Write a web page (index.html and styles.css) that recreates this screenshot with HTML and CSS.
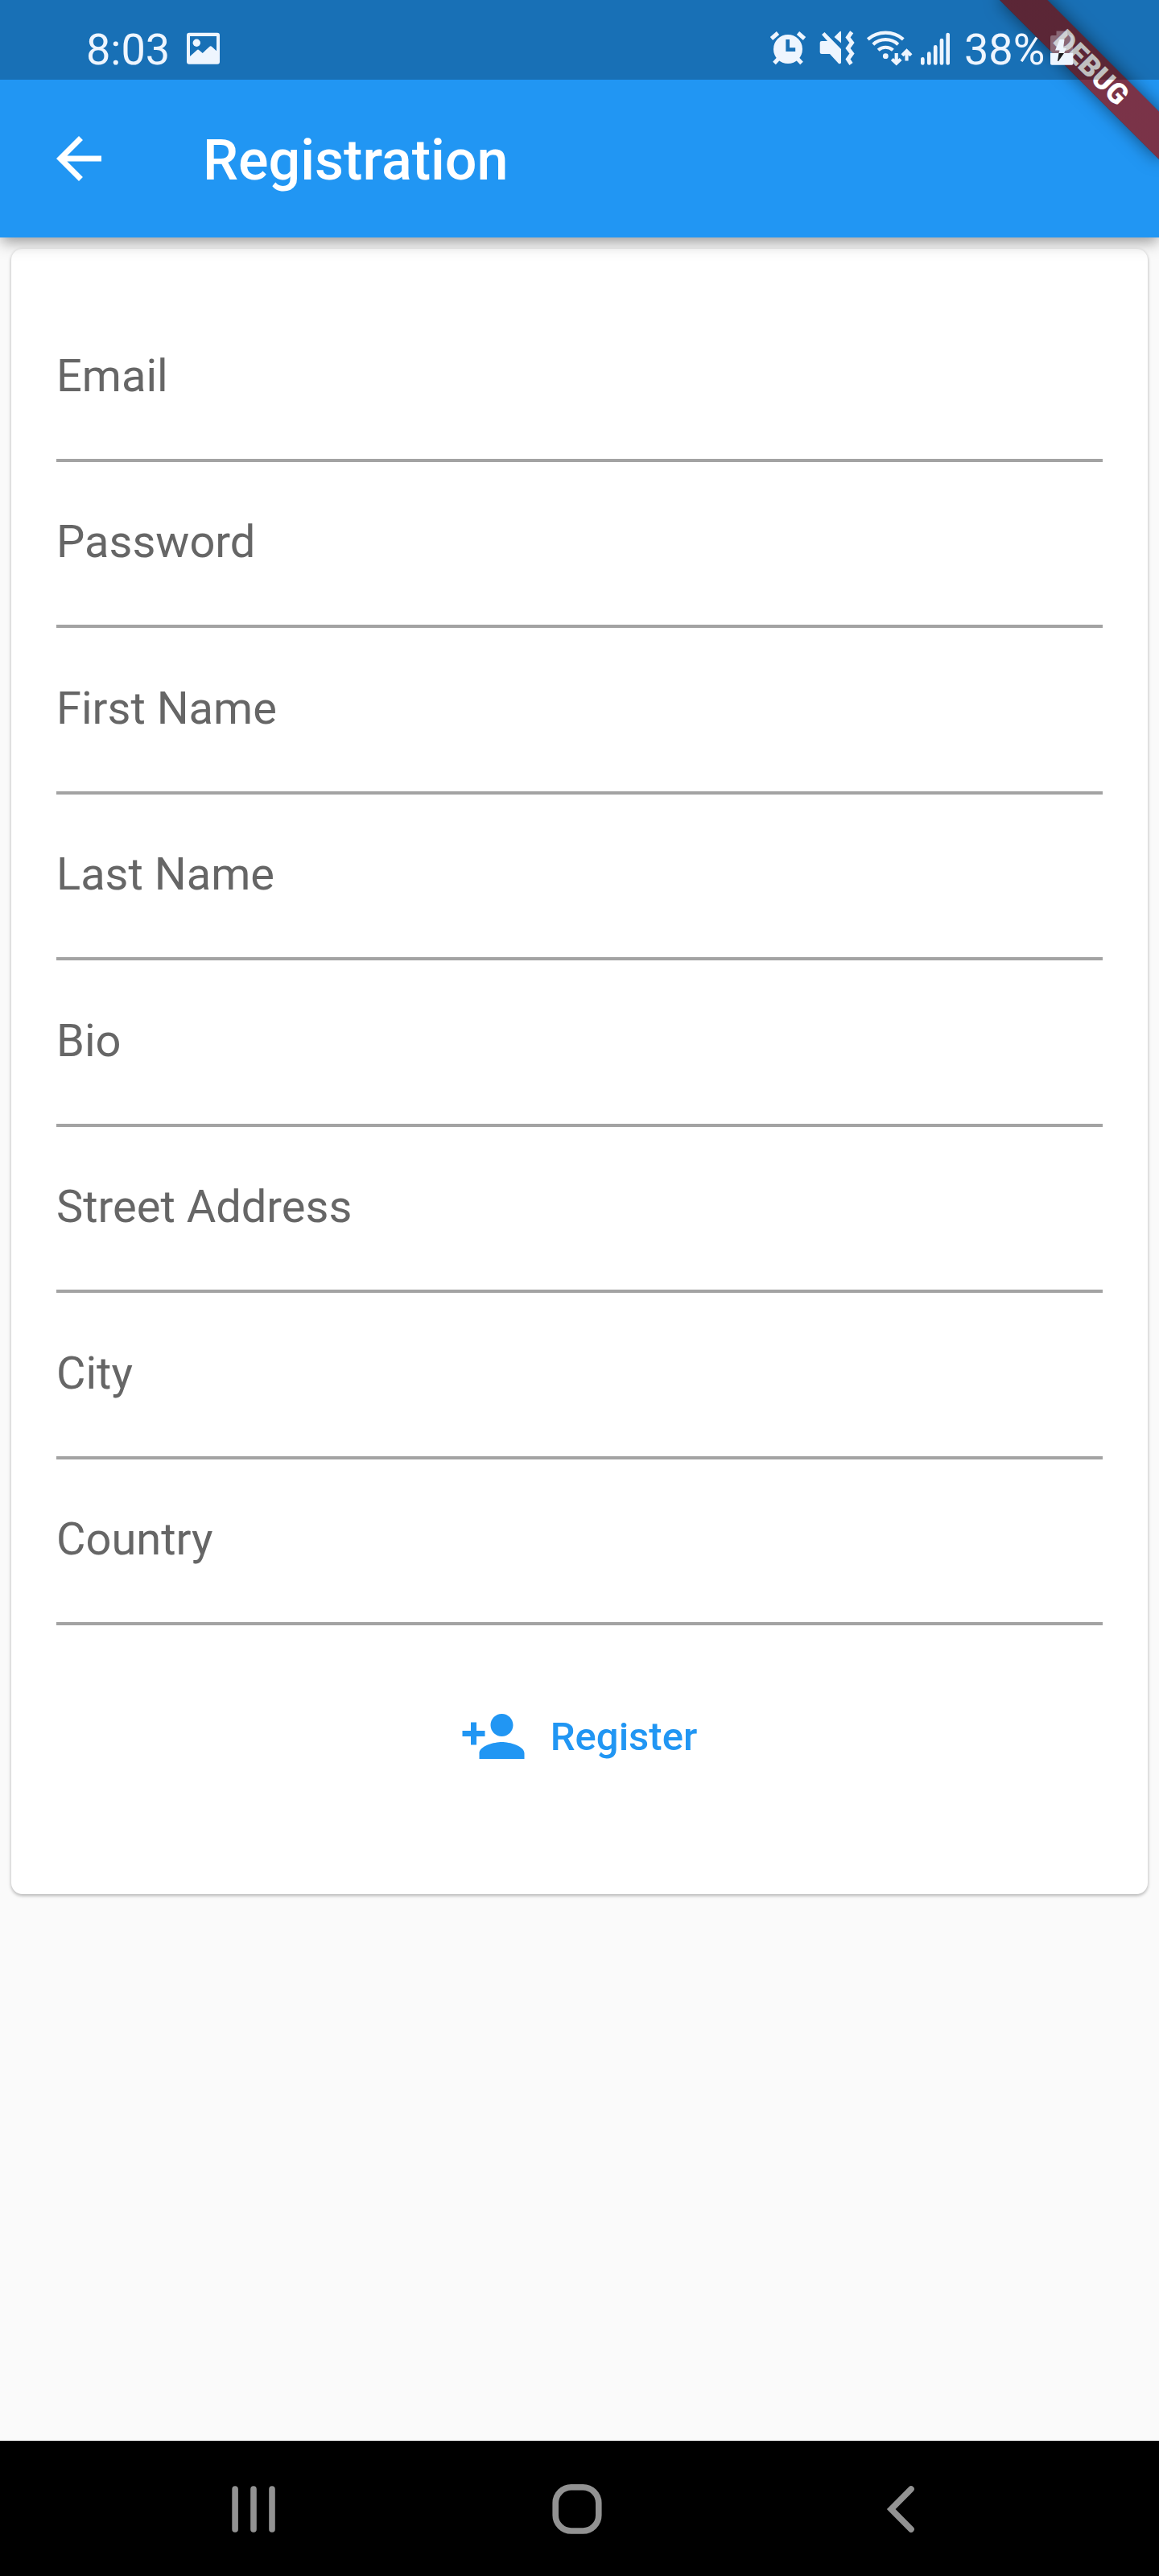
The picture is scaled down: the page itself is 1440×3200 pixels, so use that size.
FILE: index.html
```html
<!DOCTYPE html>
<html lang="en">
<head>
<meta charset="utf-8">
<title>Registration</title>
<link rel="stylesheet" href="styles.css">
</head>
<body>
<div class="screen">
  <header class="header">
    <div class="status">
      <span class="clock">8:03</span>
      <svg class="photo" width="42" height="99" viewBox="232 0 42 99"><path fill-rule="evenodd" d="M235 40.7h35a3 3 0 0 1 3 3v33a3 3 0 0 1-3 3h-35a3 3 0 0 1-3-3v-33a3 3 0 0 1 3-3zM236 45v25l9-8q1-.8 2 0l4.700 4 8.500-8q1.500-1.300 3 0l5.800 5.300V45z"/><circle cx="244.300" cy="53.300" r="4.700"/></svg>
      <div class="indicators">
        <svg width="46" height="99" viewBox="956 0 46 99"><circle cx="979" cy="61" r="18"/><path class="line w5" d="M958.500 48l8-7M991.500 41l8 7M962 78.500l6-6.500M996 78.500l-6-6.500"/><path class="hand" d="M978.700 49v12.700h9.500"/></svg>
        <svg class="mute" width="44" height="99" viewBox="1018 0 44 99"><path d="M1021 43l3.500-3L1045 61v17q-1 2-3 1l-11-12h-10q-2.300 0-2.300-2V53q0-2 2.300-2h7zM1036.500 46l6.500-6.500q2-1.500 2 .5v13.500z"/><path class="line w5" d="M1058.200 39.800l-4.700 6.700 5 6.500-5 7 5 6.500-5 7 4 6"/></svg>
        <svg class="wifi" width="58" height="99" viewBox="1076 0 58 99"><circle cx="1100.300" cy="69.700" r="3.400"/><path class="line w4" d="M1078.300 48.800a33.700 33.700 0 0 1 44 0M1084.800 55.200a23 23 0 0 1 31 0M1091.200 62.300a13.500 13.500 0 0 1 18.200 0M1113.700 66v12M1108.300 73.500l5.400 5.200 5.400-5.200M1126.500 75.500v-11M1121 68.700l5.500-5.400 5.500 5.400"/></svg>
        <svg class="signal" width="36" height="99" viewBox="1144 0 36 99"><path class="line round" d="M1146.300 73.400v5M1154.300 66.700v11.700M1162.200 58.400v20M1170 50.100v28.300M1177.700 43.100v35.300"/></svg>
        <span class="percent">38%</span>
        <svg class="battery" width="30" height="99" viewBox="1305 0 30 99"><path opacity=".32" d="M1305 66V46q0-2 2-2h5.500v-5.500h13.500V44h5.300q2 0 2 2v20z"/><path d="M1305 66h28.300v13q0 1.700-2 1.700h-24.300q-2 0-2-1.700z"/><path d="M1316.500 49h6l-1.500 11h4l-3 6h-6.500l1-3.500h-5.500z"/><path class="dark" d="M1315.500 66h6.500l-7 10h-1z"/></svg>
      </div>
    </div>
    <div class="toolbar">
      <svg class="back" width="84" height="84" viewBox="0 0 24 24"><path d="M20 11H7.830l5.590-5.590L12 4l-8 8 8 8 1.410-1.410L7.830 13H20v-2z"/></svg>
      <h1 class="title">Registration</h1>
    </div>
    <div class="corner"><div class="ribbon">DEBUG</div></div>
  </header>
  <main class="content">
    <form class="card">
      <div class="field">Email</div>
      <div class="field">Password</div>
      <div class="field">First Name</div>
      <div class="field">Last Name</div>
      <div class="field">Bio</div>
      <div class="field">Street Address</div>
      <div class="field">City</div>
      <div class="field">Country</div>
      <button class="register" type="button">
        <svg width="84" height="84" viewBox="0 0 24 24"><path d="M15 12c2.210 0 4-1.790 4-4s-1.790-4-4-4-4 1.790-4 4 1.790 4 4 4zm-9-2V7H4v3H1v2h3v3h2v-3h3v-2H6zm9 4c-2.670 0-8 1.340-8 4v2h16v-2c0-2.660-5.330-4-8-4z"/></svg>
        <span class="register-label">Register</span>
      </button>
    </form>
  </main>
  <nav class="navbar">
    <svg width="56" height="64" viewBox="288 3085 56 64"><path class="round-stroke" d="M292.100 3092v50M315 3092v50M338 3092v50"/></svg>
    <svg width="64" height="64" viewBox="685 3085 64 64"><rect x="690.200" y="3089.800" width="53.600" height="54.200" rx="19.500"/></svg>
    <svg width="36" height="64" viewBox="1101 3085 36 64"><path class="round-stroke" d="M1132 3092l-24.800 25 24.800 25"/></svg>
  </nav>
</div>
</body>
</html>
```
FILE: styles.css
```css
* { box-sizing: border-box; }
body { margin: 0; font-family: Roboto, sans-serif; background: #fafafa; }
svg { display: block; flex: none; fill: currentColor; }
.screen { width: 1440px; height: 3200px; display: flex; flex-direction: column; overflow: hidden; }

.header {
  position: relative; z-index: 1; height: 295px; flex: none; background: #2196f3; color: #fff;
  box-shadow: 0 7px 14px -3.500px rgba(0,0,0,.2), 0 7px 20px rgba(0,0,0,.22);
}
.status {
  position: relative; z-index: 2; height: 99px; display: flex; align-items: center;
  padding-left: 107px; padding-right: 105px; background: rgba(0,0,0,.25); color: #eef5fe;
  font-size: 54px; line-height: 99px;
}
.clock, .percent { padding-top: 24px; line-height: 75px; }
.clock { width: 125px; }
.indicators { margin-left: auto; display: flex; align-items: center; }
.mute { margin-left: 16px; }
.wifi { margin-left: 14px; }
.signal { margin-left: 10px; }
.percent { width: 107px; margin-left: 18px; white-space: nowrap; }
.line { fill: none; stroke: currentColor; }
.w5 { stroke-width: 5; }
.w4 { stroke-width: 4.200; }
.round { stroke-width: 4.700; stroke-linecap: round; }
.hand { fill: none; stroke: #1970b6; stroke-width: 4.700; }
.dark { fill: #1b1b1f; }

.toolbar { height: 196px; display: flex; align-items: center; padding-left: 56px; }
.title { margin: 0 0 0 112px; padding-top: 3px; font-size: 70px; font-weight: 500; line-height: 82px; }

.corner { position: absolute; z-index: 1; top: 0; right: 0; width: 340px; height: 295px; overflow: hidden; }
.ribbon {
  position: absolute; top: 98px; right: -140px; width: 280px; height: 42px;
  transform: rotate(45deg); transform-origin: 50% -98px;
  background: linear-gradient(rgba(183,28,28,.627), rgba(183,28,28,.627)), rgba(0,0,0,.4);
  box-shadow: 0 0 21px rgba(0,0,0,.5);
  font-size: 35.700px; font-weight: 900; line-height: 42px; text-align: center;
}

.content { flex: 1; padding: 14px; }
.card {
  height: 2044px; padding: 58px 56px 0; background: #fff; border-radius: 14px;
  box-shadow: 0 2px 4px rgba(0,0,0,.26), 0 1px 4px rgba(0,0,0,.06);
  display: flex; flex-direction: column;
}
.field {
  height: 206.500px; padding-top: 66.600px; border-bottom: 4px solid #a3a3a3;
  color: #666; font-size: 56px; line-height: 66px;
}
.register {
  margin: 96px auto 0; padding: 0; border: 0; background: none; color: #2196f3;
  display: flex; align-items: center; gap: 29px; font: 500 49px/58px Roboto, sans-serif;
  position: relative; left: -1.500px;
}
.register-label { padding-top: 2px; }

.navbar { height: 168px; flex: none; background: #000; color: #929292; display: flex; align-items: center; padding: 2px 0 0 288px; }
.navbar svg { fill: none; stroke: currentColor; stroke-width: 7.600; }
.navbar svg + svg { margin-left: 341px; }
.navbar svg:last-child { margin-left: 352px; }
.round-stroke { stroke-linecap: round; }
```
